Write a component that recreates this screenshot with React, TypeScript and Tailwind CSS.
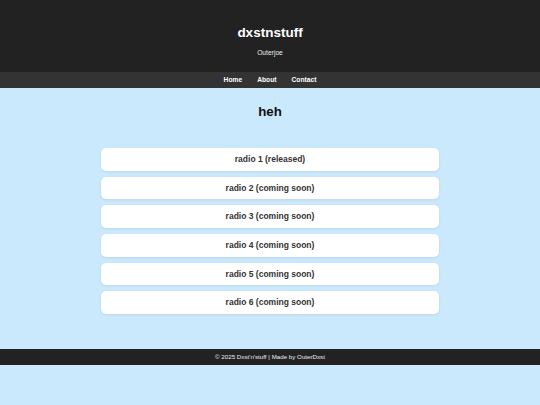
const radios = [
  "radio 1 (released)",
  "radio 2 (coming soon)",
  "radio 3 (coming soon)",
  "radio 4 (coming soon)",
  "radio 5 (coming soon)",
  "radio 6 (coming soon)",
];

export default function App() {
  return (
    <div
      className="min-h-screen bg-[#cbe9fc]"
      style={{ fontFamily: '"Liberation Sans", Arial, sans-serif' }}
    >
      <header className="h-[72px] bg-[#222222] flex flex-col items-center pt-[25px] text-white">
        <h1 className="text-[13.5px] leading-[16px] font-bold">dxstnstuff</h1>
        <p className="mt-[8px] text-[6.7px] leading-[8px] text-[#eeeeee]">Outerjoe</p>
      </header>

      <nav className="h-[16px] bg-[#333333] flex items-center justify-center gap-[15px]">
        <a className="text-[6.7px] font-bold text-white">Home</a>
        <a className="text-[6.7px] font-bold text-white">About</a>
        <a className="text-[6.7px] font-bold text-white">Contact</a>
      </nav>

      <main className="pt-[16px] pb-[35px] flex flex-col items-center">
        <h2 className="text-[13.3px] leading-[16px] font-bold text-[#111111]">heh</h2>
        <div className="mt-[28px] w-[338px] flex flex-col gap-[6.2px]">
          {radios.map((r) => (
            <div
              key={r}
              className="h-[22.5px] bg-white rounded-[5px] shadow-[0_1px_3px_rgba(0,0,0,0.08)] flex items-center justify-center text-[8.5px] font-bold text-[#333333]"
            >
              {r}
            </div>
          ))}
        </div>
      </main>

      <footer className="h-[16px] bg-[#222222] flex items-center justify-center text-[6.2px] text-[#eeeeee]">
        © 2025 Dxst'n'stuff | Made by OuterDxst
      </footer>
    </div>
  );
}
